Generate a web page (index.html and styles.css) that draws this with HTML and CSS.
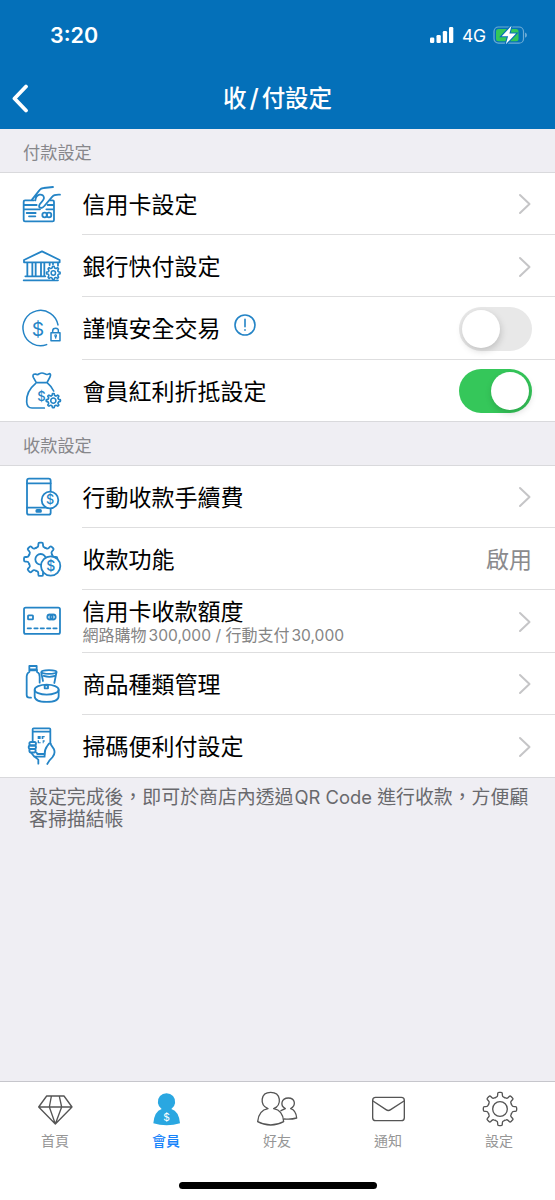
FILE: index.html
```html
<!DOCTYPE html>
<html lang="zh-Hant">
<head>
<meta charset="utf-8">
<title>收/付設定</title>
<link rel="stylesheet" href="styles.css">
</head>
<body>
<svg class="defs" width="0" height="0" aria-hidden="true">
  <defs>
    <path id="tooth" d="M-14.2-34.2A37 37 0 0 1-11-35.6Q-7-37-7-42V-46Q-7-50-3-50H3Q7-50 7-46V-42Q7-37 11-35.6A37 37 0 0 1 14.2-34.2"/>
    <g id="gear">
      <use href="#tooth"/><use href="#tooth" transform="rotate(45)"/><use href="#tooth" transform="rotate(90)"/><use href="#tooth" transform="rotate(135)"/>
      <use href="#tooth" transform="rotate(180)"/><use href="#tooth" transform="rotate(225)"/><use href="#tooth" transform="rotate(270)"/><use href="#tooth" transform="rotate(315)"/>
    </g>
  </defs>
</svg>
<div class="screen">
  <header class="top">
    <div class="status">
      <span class="time">3:20</span>
      <div class="status-right">
        <svg class="signal" viewBox="0 0 25 18"><rect x="0" y="11.5" width="4.3" height="5.5" rx="1.3"/><rect x="6.5" y="9" width="4.3" height="8" rx="1.3"/><rect x="12.8" y="5" width="4.3" height="12" rx="1.3"/><rect x="19" y="1" width="4.3" height="16" rx="1.3"/></svg>
        <span class="net">4G</span>
        <svg class="battery" viewBox="0 0 36 20"><rect x="1" y="2" width="29.5" height="16.2" rx="4.5" fill="none" stroke="#fff" stroke-opacity=".42" stroke-width="1.2"/><path d="M32.2 7.500q1.600.5 1.600 2.600t-1.600 2.600z" fill="#fff" fill-opacity=".5"/><rect x="3" y="4" width="22.5" height="12.2" rx="2.5" fill="#34c759"/><path d="M18.5.8 8.700 11.200h6.400L12.800 19.300 23 8.500h-6.600z" fill="#fff" stroke="#0470b9" stroke-width="2.2" paint-order="stroke"/></svg>
      </div>
    </div>
    <div class="nav">
      <svg class="back" viewBox="0 0 20 30"><path d="M16 2.500 4.500 14.500 16 26.500"/></svg>
      <h1>收<i>/</i>付設定</h1>
    </div>
  </header>

  <h2 class="section">付款設定</h2>
  <ul class="list">
    <li class="row">
      <svg class="icon" viewBox="0 -9 165 187"><path d="M72 73H45q-4 0-4 4v55q0 4 4 4h83q4 0 4-4V77q0-4-4-4h-8M41 87H80M113 87H132M41 100H90M109 100H132M50 111H77M57 121H76"/><circle cx="104" cy="117" r="7"/><circle cx="117" cy="117" r="7"/><path d="M66 71 88 43Q93 36 101 36L129 33M76 73Q77 60 88 56 101 54 102 66 101 73 89 85 84 95 93 96 98 96 103 90L127 62Q132 55 150 56"/></svg>
      <div class="body"><span class="label">信用卡設定</span><svg class="chev" viewBox="0 0 14 22"><path d="M2 2 11.5 11 2 20"/></svg></div>
    </li>
    <li class="row">
      <svg class="icon" viewBox="0 178 165 187"><path d="M42 253 96 227 149 253V260H42ZM52 262V301M67 262V301M77 262V301M93 262V301M103 262V301M119 262V268M129 262V266M144 262V270M46 302H106M41 314H144"/><g transform="translate(130 292) scale(.41)" stroke-width="11"><circle r="51" fill="#fff" stroke="none"/><use href="#gear"/><circle r="16"/></g></svg>
      <div class="body"><span class="label">銀行快付設定</span><svg class="chev" viewBox="0 0 14 22"><path d="M2 2 11.5 11 2 20"/></svg></div>
    </li>
    <li class="row">
      <svg class="icon" viewBox="0 -9 165 187"><path d="M144 75A53 53 0 1 0 110 134M123 98H150V122H123ZM128 97V93Q128 85 137 85T145 93V97M137 109V114" stroke-width="4.5"/><circle cx="137" cy="107" r="1.5"/><text class="money" x="84" y="107" font-size="58">$</text></svg>
      <div class="body"><span class="label">謹慎安全交易</span><svg class="info" viewBox="0 0 24 24"><circle cx="12" cy="12" r="10"/><path d="M12 6.300v7.500M12 16.800v.5"/></svg><span class="switch"></span></div>
    </li>
    <li class="row last">
      <svg class="icon" viewBox="0 178 165 187"><path d="M79 246 70 230Q66 220 76 220 83 224 88 219 96 215 104 219 111 224 118 219 124 220 120 229L111 246ZM77 248Q48 272 50 304 51 322 66 322H103M112 247Q125 258 131 271" stroke-width="5"/><text class="money mid" x="94" y="300" font-size="39">$</text><g transform="translate(130 300) scale(.43)" stroke-width="11"><use href="#gear"/><circle r="18"/></g></svg>
      <div class="body"><span class="label">會員紅利折抵設定</span><span class="switch on"></span></div>
    </li>
  </ul>

  <h2 class="section">收款設定</h2>
  <ul class="list">
    <li class="row">
      <svg class="icon" viewBox="0 -9 165 187"><rect x="51" y="29" width="71" height="108" rx="6"/><path d="M51 43H122M51 116H122"/><rect x="79" y="123" width="14" height="6" rx="2" fill="#2484c6"/><circle cx="120" cy="93" r="25" fill="#fff"/><text class="money mid" x="120" y="106" font-size="38">$</text></svg>
      <div class="body"><span class="label">行動收款手續費</span><svg class="chev" viewBox="0 0 14 22"><path d="M2 2 11.5 11 2 20"/></svg></div>
    </li>
    <li class="row">
      <svg class="icon" viewBox="0 178 165 187"><use href="#gear" transform="translate(92 272)"/><circle cx="92" cy="272" r="16"/><circle cx="122" cy="292" r="29" fill="#fff"/><text class="money mid" x="122" y="307" font-size="42">$</text></svg>
      <div class="body"><span class="label">收款功能</span><span class="value">啟用</span></div>
    </li>
    <li class="row">
      <svg class="icon" viewBox="0 -9 165 187"><rect x="42" y="44" width="108" height="79" rx="5"/><rect x="54" y="67" width="15" height="12" rx="2"/><ellipse cx="120" cy="72" rx="8" ry="7.5"/><ellipse cx="129" cy="72" rx="8" ry="7.5"/><path d="M53 106H63M73 106H83M92 106H102M111 106H121M130 106H140"/></svg>
      <div class="body"><div class="stack"><span class="label">信用卡收款額度</span><span class="sub">網路購物<b>300,000 / </b>行動支付<b>30,000</b></span></div><svg class="chev" viewBox="0 0 14 22"><path d="M2 2 11.5 11 2 20"/></svg></div>
    </li>
    <li class="row">
      <svg class="icon" viewBox="0 178 165 187"><path d="M58 217H80V227H58ZM58 228V235Q49 239 50 254V304Q50 312 58 312H63M81 228V235Q89 238 89 249V267M58 230H80M94 238 99 262M139 238 133 268"/><ellipse cx="117" cy="235" rx="23" ry="5.5"/><path d="M101 247Q118 252 135 247"/><ellipse cx="110" cy="288" rx="36" ry="15"/><path d="M74 289V308Q74 325 110 325T146 308V289M104 275H114V284H104Z"/></svg>
      <div class="body"><span class="label">商品種類管理</span><svg class="chev" viewBox="0 0 14 22"><path d="M2 2 11.5 11 2 20"/></svg></div>
    </li>
    <li class="row last">
      <svg class="icon" viewBox="0 366 165 187"><path d="M68 443V409Q68 406 71 406H118Q121 406 121 409V448M69 416H120M82 483H104"/><path class="qr" d="M83 429h9v9h-9zM95 429h9v4h-4v5h-5zM83 442h4v6h5v3h-9zM98 442h6v4h-3v5h-3z"/><rect x="58" y="447" width="20" height="10.500" rx="5"/><rect x="56" y="457.500" width="22" height="10.500" rx="5"/><rect x="58" y="468" width="19" height="10.500" rx="5"/><path d="M64 480 73 491H104M73 491 85 500V512M104 489Q103 470 111 460L117 452Q123 449 123 455L132 469Q137 482 127 493 117 502 112 513M79 479 84 483"/></svg>
      <div class="body"><span class="label">掃碼便利付設定</span><svg class="chev" viewBox="0 0 14 22"><path d="M2 2 11.5 11 2 20"/></svg></div>
    </li>
  </ul>
  <p class="note">設定完成後，即可於商店內透過<b>QR Code </b>進行收款，方便顧<br>客掃描結帳</p>

  <nav class="tabs">
    <a class="tab"><svg viewBox="0 30 333 132"><path d="M140 63H192L216 96 166 147 116 96ZM116 96H216M154 64 148 96 166 147 185 96 178 64"/></svg><span>首頁</span></a>
    <a class="tab active"><svg viewBox="333 30 333 132"><path fill="#2aa7e1" stroke="none" d="M485 102A26 26 0 1 1 514 102Q537 109 540 145 521 151 500 151T460 145Q463 109 485 102Z"/><text x="499.500" y="139" font-size="31">$</text></svg><span>會員</span></a>
    <a class="tab"><svg viewBox="666 30 333 132"><path d="M804 101C778 90 781 52 812 52S847 90 821 101Q849 106 851 140 833 150 812 150T773 140Q776 106 804 101ZM856 101C839 92 844 69 865 69S889 92 872 101Q888 106 890 129 874 134 853 132M856 101 843 107"/></svg><span>好友</span></a>
    <a class="tab"><svg viewBox="174 30 333 132"><rect x="293" y="67" width="95" height="70" rx="9"/><path d="M294 78 333 104Q340 109 347 104L387 78"/></svg><span>通知</span></a>
    <a class="tab"><svg viewBox="507 30 333 132"><use href="#gear" transform="translate(675 102)"/><circle cx="675" cy="102" r="22"/></svg><span>設定</span></a>
    <i class="home"></i>
  </nav>
</div>
</body>
</html>
```
FILE: styles.css
```css
* { box-sizing: border-box; }
body { margin: 0; font-family: Inter, "Noto Sans CJK TC", sans-serif; color: #000; }
.defs { position: absolute; }
.screen { width: 555px; height: 1200px; display: flex; flex-direction: column; background: #efeef3; overflow: hidden; }

.top { height: 129px; background: #0470b9; color: #fff; flex: none; }
.status { height: 70px; display: flex; justify-content: space-between; padding: 0 31px 0 50px; align-items: center; }
.time { font-size: 21.5px; font-weight: 600; letter-spacing: 0; }
.status-right { display: flex; align-items: center; }
.signal { width: 25px; height: 18px; fill: #fff; }
.net { font-size: 17.5px; margin-left: 7px; width: 25px; letter-spacing: -.3px; }
.battery { width: 36px; height: 20px; margin-left: 6px; margin-right: -5px; }
.nav { height: 57px; display: grid; grid-template-columns: 40px 1fr 40px; align-items: center; }
.back { width: 20px; height: 30px; margin-left: 10px; fill: none; stroke: #fff; stroke-width: 3.8; stroke-linecap: round; stroke-linejoin: round; }
h1 { margin: 0; font-size: 23.5px; line-height: 28px; font-weight: 500; text-align: center; }
h1 i { font-style: normal; margin: 0 3px; font-size: 25px; }

.section { flex: none; height: 43.5px; margin: 0; padding: 5px 0 0 23px; border-bottom: 1px solid #d9d9dc; font-size: 17.2px; line-height: 38px; font-weight: 400; color: #87878b; }
.list { flex: none; margin: 0; padding: 0; list-style: none; background: #fff; }
.row { height: 62.4px; display: flex; padding-left: 10px; }
.row.last { border-bottom: 1px solid #d9d9dc; }
.icon { flex: none; width: 55px; height: 62.3px; margin-right: 17px; fill: none; stroke: #2484c6; stroke-width: 5.4; stroke-linecap: round; stroke-linejoin: round; }
.qr { fill: #2484c6; stroke: none; }
.money { fill: #2484c6; stroke: none; font-family: Inter, sans-serif; text-anchor: middle; font-weight: 400; }
.money.mid { font-weight: 500; }
.body { flex: 1; display: flex; align-items: center; border-bottom: 1px solid #dededf; padding: 2px 23px 0 0; }
.last .body { border-bottom: 0; }
.label { font-size: 23px; line-height: 30px; padding: 1px 0 0 .5px; }
.chev { width: 14px; height: 22px; margin-left: auto; fill: none; stroke: #c5c5c7; stroke-width: 2; stroke-linecap: round; stroke-linejoin: round; }
.info { width: 24px; height: 24px; margin: -8px 0 0 12px; fill: none; stroke: #2484c6; stroke-width: 1.6; stroke-linecap: round; }
.value { margin-left: auto; font-size: 23px; line-height: 30px; color: #8b8b8e; padding-top: 1px; }
.switch { margin-left: auto; width: 73px; height: 44px; padding: 3px; border-radius: 22px; background: #e8e8e8; display: flex; }
.switch::before { content: ""; width: 38px; height: 38px; border-radius: 50%; background: #fff; box-shadow: 1px 3px 7px rgba(0,0,0,.17); }
.switch.on { background: #35c75a; justify-content: flex-end; }
.stack { display: flex; flex-direction: column; }
.stack .label { line-height: 27px; padding-top: 0; }
.sub { font-size: 16px; line-height: 18px; padding-left: .5px; color: #858585; white-space: pre; }
.sub b, .note b { font-weight: 400; }
.sub b { font-size: 15.6px; margin-left: 2px; }
.note { margin: 8px 0 0 29px; font-size: 18.9px; line-height: 22px; color: #69696d; white-space: nowrap; }
.note b { font-size: 18.4px; white-space: pre; margin-left: 1px; }

.tabs { margin-top: auto; height: 119px; border-top: 1px solid #c6c6cc; background: #fff; display: grid; grid-template-columns: repeat(5, 1fr); grid-template-rows: 99px 19px; flex: none; }
.tab { display: flex; flex-direction: column; padding-top: 3px; text-align: center; color: #969696; font-size: 14px; line-height: 20px; }
.tab svg { width: 111px; height: 44px; fill: none; stroke: #555; stroke-width: 4; stroke-linejoin: round; stroke-linecap: round; }
.tab text { fill: #fff; stroke: none; text-anchor: middle; font-family: Inter, sans-serif; font-weight: 400; }
.tab span { margin: 2px 1px 0 0; }
.tab.active { color: #1683fa; font-weight: 500; }
.home { grid-column: 1 / -1; justify-self: center; width: 198px; height: 7px; border-radius: 4px; background: #000; margin-top: 1px; }
```
